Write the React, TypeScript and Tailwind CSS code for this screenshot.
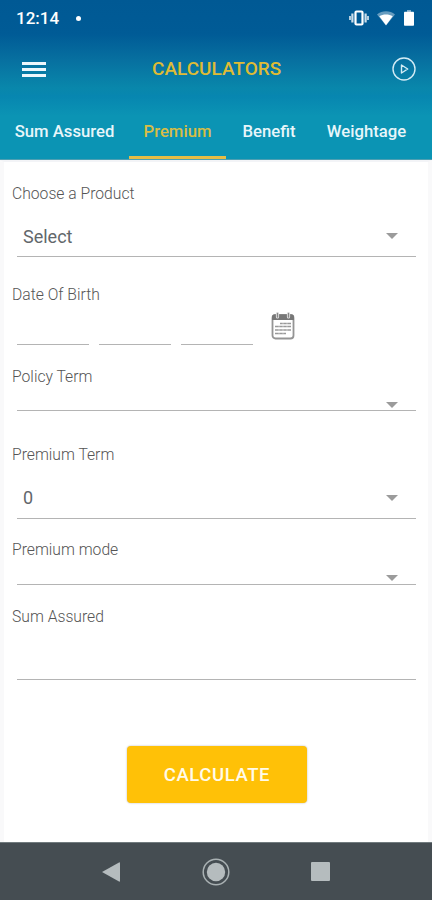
import { useState } from 'react'
import clsx from 'clsx'

const tabs = [
  { label: 'Sum Assured', width: 'w-[129px]' },
  { label: 'Premium', width: 'w-[97px]' },
  { label: 'Benefit', width: 'w-[86px]' },
  { label: 'Weightage', width: 'w-[109px]' }
]

function StatusBar() {
  return (
    <div className="flex h-9 items-center pl-4 pr-[18px] text-white">
      <span className="text-[17px] font-medium leading-9">12:14</span>
      <span className="ml-[17px] h-[5px] w-[5px] rounded-full bg-white" />
      <div className="ml-auto flex items-center">
        <svg width="22" height="18" viewBox="0 0 22 18" fill="none" stroke="currentColor">
          <rect x="7.5" y="2.5" width="7" height="13" rx="1" strokeWidth="2.2" />
          <path d="M4.4 4.5v9M17.6 4.5v9" strokeWidth="2.2" opacity="0.8" />
          <path d="M2 7v4M20 7v4" strokeWidth="2" opacity="0.7" />
        </svg>
        <svg className="ml-[7px]" width="18" height="16" viewBox="0 0 18 16" fill="currentColor">
          <path d="M0 4.5C5 .2 13 .2 18 4.5L9 15.5z" opacity="0.4" />
          <path d="M2.3 6.2C6 3.8 12 3.8 15.7 6.2L9 15.2z" />
        </svg>
        <svg className="ml-[9px]" width="10" height="16" viewBox="0 0 10 16" fill="currentColor">
          <path d="M3 0h4v2H3z" opacity="0.5" />
          <rect y="1.8" width="10" height="14" rx="0.8" />
        </svg>
      </div>
    </div>
  )
}

function Caret({ className }: { className?: string }) {
  return (
    <svg className={clsx('ml-auto mr-[18px]', className)} width="12" height="6" viewBox="0 0 12 6" fill="#9b9b9b" aria-hidden="true">
      <path d="M0 0h12L6 6z" />
    </svg>
  )
}

function Label({ children }: { children: string }) {
  return <div className="h-5 text-[15.7px] font-light leading-[21px] text-[#555]">{children}</div>
}

function CalendarIcon() {
  return (
    <svg width="24" height="28" viewBox="0 0 24 28" fill="none">
      <rect x="1.5" y="3" width="21" height="23.5" rx="3" fill="#fff" stroke="#959595" strokeWidth="1.8" />
      <path d="M1 8V5a2.5 2.5 0 0 1 2.5-2.5h17A2.5 2.5 0 0 1 23 5v3z" fill="#777" />
      <path d="M6.5 1.5v3.5M17.5 1.5v3.5" stroke="#e4e4e4" strokeWidth="3.2" strokeLinecap="round" />
      <path d="M6.5 1.5v3.5M17.5 1.5v3.5" stroke="#888" strokeWidth="1.4" strokeLinecap="round" />
      <path d="M9 11.5h11M4 14.5h16M4 18h16M4 21.5h11" stroke="#999" strokeWidth="1.4" />
      <path d="M8 10v12M12 10v12M16 10v10" stroke="#fff" strokeWidth="0.4" />
    </svg>
  )
}

export default function App() {
  const [activeTab, setActiveTab] = useState(1)

  return (
    <div className="flex h-[900px] w-[432px] flex-col overflow-hidden bg-white font-['Roboto',sans-serif]">
      <header className="h-[160px] shrink-0 border-b border-[#4d9fb2] bg-[linear-gradient(to_bottom,#005994_0px,#005b96_34px,#0770a0_60px,#0987ab_88px,#0786b0_96px,#0b94b4_116px,#0b94b4_160px)]">
        <StatusBar />
        <div className="flex h-[66px] items-center pl-[22px] pr-4">
          <button className="flex w-6 flex-col gap-[3px]" aria-label="Menu">
            <span className="h-[3px] w-full bg-[#edf7fc]" />
            <span className="h-[3px] w-full bg-[#edf7fc]" />
            <span className="h-[3px] w-full bg-[#edf7fc]" />
          </button>
          <h1 className="ml-[106px] text-[19px] font-medium leading-6 text-[#dfbb35]">CALCULATORS</h1>
          <svg className="ml-auto" width="24" height="24" viewBox="0 0 24 24" fill="none" stroke="#d3ecf5" strokeWidth="1.4">
            <circle cx="12" cy="12" r="11" />
            <path d="M9.5 8l6.2 4-6.2 4z" strokeLinejoin="round" />
          </svg>
        </div>
        <nav className="flex h-[57px]" role="tablist">
          {tabs.map((tab, index) => (
            <button
              key={tab.label}
              role="tab"
              aria-selected={activeTab === index}
              onClick={() => setActiveTab(index)}
              className={clsx(
                'shrink-0 border-b-[3px] pt-[5px] text-[16.7px] font-medium',
                tab.width,
                activeTab === index ? 'border-[#e6bd45] text-[#d9bd45]' : 'border-transparent text-[#e8f6fa]'
              )}
            >
              {tab.label}
            </button>
          ))}
        </nav>
      </header>

      <main className="flex-1 border-x-4 border-t-2 border-[#f9f9fa] border-t-[#f3f4f7] px-2 pt-[21px]">
        <Label>Choose a Product</Label>
        <div className="ml-[5px] mr-1 flex h-[54px] items-center border-b-[1.5px] border-[#b4b4b4] pl-[6px] pt-[13px] text-[18px] text-[#62676b]">
          Select
          <Caret />
        </div>

        <div className="mt-[27px]">
          <Label>Date Of Birth</Label>
          <div className="ml-[5px] flex h-[41px] gap-[10px]">
            <div className="w-[72px] border-b-[1.5px] border-[#b4b4b4]" />
            <div className="w-[72px] border-b-[1.5px] border-[#b4b4b4]" />
            <div className="w-[72px] border-b-[1.5px] border-[#b4b4b4]" />
            <button className="ml-2 self-start pt-2" aria-label="Pick a date">
              <CalendarIcon />
            </button>
          </div>
        </div>

        <div className="mt-[21px]">
          <Label>Policy Term</Label>
          <div className="ml-[5px] mr-1 flex h-[25px] items-end border-b-[1.5px] border-[#b4b4b4]">
            <Caret className="mb-[2px]" />
          </div>
        </div>

        <div className="mt-[33px]">
          <Label>Premium Term</Label>
          <div className="ml-[5px] mr-1 flex h-[55px] items-center border-b-[1.5px] border-[#b4b4b4] pl-[6px] pt-[13px] text-[18px] text-[#62676b]">
            0
            <Caret />
          </div>
        </div>

        <div className="mt-[20px]">
          <Label>Premium mode</Label>
          <div className="ml-[5px] mr-1 flex h-[26px] items-end border-b-[1.5px] border-[#b4b4b4]">
            <Caret className="mb-[3px]" />
          </div>
        </div>

        <div className="mt-[21px]">
          <Label>Sum Assured</Label>
          <div className="ml-[5px] mr-1 h-[54px] border-b-[1.5px] border-[#b4b4b4]" />
        </div>

        <button className="ml-[115px] mt-[66px] block h-[57px] w-[180px] rounded bg-[#ffc107] pt-[3px] text-[18.5px] font-medium tracking-[0.6px] text-[#fffbea] shadow-[0_0_2px_rgba(0,0,0,0.3)]">
          CALCULATE
        </button>
      </main>

      <footer className="flex h-[58px] shrink-0 items-center justify-between border-t border-[#717b7e] bg-[#454d52] pl-[101px] pr-[102px]">
        <svg width="20" height="22" viewBox="0 0 20 22" fill="#b5bcbe">
          <path d="M1 11L18 1.5q1-.5 1 .8v17.4q0 1.3-1 .8z" />
        </svg>
        <svg width="28" height="28" viewBox="0 0 28 28" fill="none">
          <circle cx="14" cy="14" r="12.8" stroke="#a9b1b3" strokeWidth="1.5" />
          <circle cx="14" cy="14" r="9.2" fill="#b5bcbe" />
        </svg>
        <span className="h-[19px] w-[19px] rounded-[1px] bg-[#b5bcbe]" />
      </footer>
    </div>
  )
}
